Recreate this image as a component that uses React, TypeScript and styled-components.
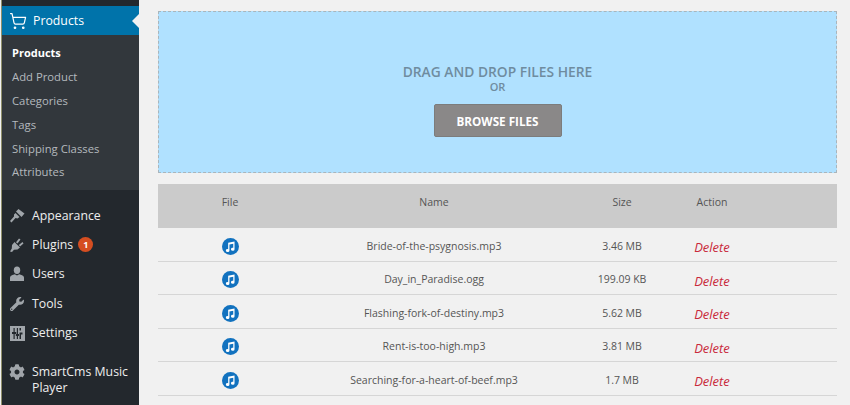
import React from 'react';
import styled, { createGlobalStyle } from 'styled-components';
import { FaWrench, FaCog } from 'react-icons/fa';
import { ShoppingCart } from 'lucide-react';

const GlobalStyle = createGlobalStyle`
  html, body {
    margin: 0;
    padding: 0;
    height: 405px;
    overflow: hidden;
    background: #f1f1f1;
    font-family: "Open Sans", "Noto Sans", sans-serif;
  }
`;

const Page = styled.div`
  display: flex;
  width: 850px;
  height: 405px;
  overflow: hidden;
`;

const Sidebar = styled.nav`
  width: 138px;
  margin-left: 1px;
  flex-shrink: 0;
  padding-top: 6px;
  background: #23282d;
  border-left: 1px solid #8f8f6a;
  box-sizing: border-box;
`;

const ActiveItem = styled.div`
  position: relative;
  display: flex;
  align-items: center;
  height: 29px;
  background: #0073aa;
  color: #fff;
  font-size: 12.3px;
  padding-left: 7px;
  gap: 6px;

  &::after {
    content: '';
    position: absolute;
    right: 0;
    top: 8px;
    border: 7px solid transparent;
    border-right-color: #f1f1f1;
    border-left-width: 0;
  }
`;

const SubMenu = styled.div`
  background: #32373c;
  padding: 6px 0 6px 10px;
  height: 155px;
  box-sizing: border-box;
`;

const SubItem = styled.div<{ $current?: boolean }>`
  height: 23.9px;
  line-height: 24px;
  font-size: ${(p) => (p.$current ? 11 : 11.3)}px;
  color: ${(p) => (p.$current ? '#fff' : '#b4b9be')};
  font-weight: ${(p) => (p.$current ? 700 : 400)};
`;

const MainMenu = styled.div`
  padding-top: 11px;
`;

const MenuItem = styled.div<{ $wrapped?: boolean }>`
  display: flex;
  align-items: ${(p) => (p.$wrapped ? 'flex-start' : 'center')};
  min-height: 29.4px;
  margin-top: ${(p) => (p.$wrapped ? 16 : 0)}px;
  padding-left: 7px;
  gap: 7px;
  color: #eee;
  font-size: 12.3px;
  line-height: 16px;
`;

const IconSlot = styled.span`
  display: flex;
  width: 16px;
  height: 16px;
  justify-content: center;
  align-items: center;
  color: #a0a5aa;
  flex-shrink: 0;
`;

const Badge = styled.span`
  display: inline-block;
  width: 15px;
  height: 15px;
  margin-left: 5px;
  border-radius: 50%;
  background: #d54e21;
  color: #fff;
  font-size: 9px;
  font-weight: 700;
  line-height: 15px;
  text-align: center;
  vertical-align: 1px;
`;

const Content = styled.main`
  flex: 1;
  padding: 11px 13px 0 19px;
  min-width: 0;
`;

const DropZone = styled.div`
  display: flex;
  flex-direction: column;
  align-items: center;
  height: 162px;
  padding-top: 52px;
  box-sizing: border-box;
  background: #b0e1ff;
  border: 1px dashed #a9b5bc;
`;

const DropTitle = styled.div`
  font-size: 13.8px;
  line-height: 16px;
  font-weight: 600;
  color: #6f8c9f;
`;

const DropOr = styled.div`
  font-size: 11px;
  line-height: 14px;
  font-weight: 600;
  color: #6f8c9f;
`;

const BrowseButton = styled.button`
  margin-top: 10px;
  width: 128px;
  height: 33px;
  padding: 0;
  border: 1px solid #7c7c7c;
  border-radius: 2px;
  background: #8a8888;
  color: #fff;
  font-family: inherit;
  font-size: 11.7px;
  font-weight: 700;
`;

const Table = styled.div`
  margin-top: 11px;
`;

const columns = '144px 264px 112px 68px 1fr';

const HeadRow = styled.div`
  display: grid;
  grid-template-columns: ${columns};
  height: 44px;
  background: #cbcbcb;
  padding-top: 10px;
  box-sizing: border-box;
  color: #555;
  font-size: 10.5px;
  line-height: 16px;
  text-align: center;
`;

const FileRow = styled.div`
  display: grid;
  grid-template-columns: ${columns};
  align-items: center;
  height: 33.5px;
  padding-top: 3px;
  box-sizing: border-box;
  border-bottom: 1px solid #d6d6d6;
  color: #555;
  font-size: 10.5px;
  text-align: center;
`;

const MusicBadge = styled.svg`
  display: block;
  width: 17px;
  height: 17px;
  margin: 1px auto 0;
`;

const DeleteLink = styled.a`
  color: #c9293a;
  font-size: 13px;
  font-style: italic;
  margin-top: 3px;
`;

const files = [
  { name: 'Bride-of-the-psygnosis.mp3', size: '3.46 MB' },
  { name: 'Day_in_Paradise.ogg', size: '199.09 KB' },
  { name: 'Flashing-fork-of-destiny.mp3', size: '5.62 MB' },
  { name: 'Rent-is-too-high.mp3', size: '3.81 MB' },
  { name: 'Searching-for-a-heart-of-beef.mp3', size: '1.7 MB' },
];

const BrushIcon = () => (
  <svg width="16" height="16" viewBox="0 0 16 16" fill="currentColor">
    <path d="M9.500 1 15.500 5.500 12.500 9 7 3.500z" />
    <path d="M6.500 5 10.500 9 8.500 10.500 6.500 10 2.500 14.500 1 13 5 8.500 5 6.500z" />
  </svg>
);

const PlugIcon = () => (
  <svg width="16" height="16" viewBox="0 0 16 16" fill="currentColor">
    <path d="M5.500 5 11 10.500 8.500 12.500 5 12.800 3 15 1 14.500 2.800 11.500 3 8z" />
    <path d="M7 5.200 10 1.500 11.500 2.500 8.500 6.500zM9.800 8 13.500 5 14.500 6.500 11 9.500z" />
  </svg>
);

const UserIcon = () => (
  <svg width="16" height="16" viewBox="0 0 16 16" fill="currentColor">
    <ellipse cx="8" cy="4.200" rx="3.200" ry="3.700" />
    <path d="M1 15v-3.500Q1 9.500 3.500 9L5.800 8.200 8 9.500 10.200 8.200 12.500 9Q15 9.500 15 11.500V15z" />
  </svg>
);

const SettingsIcon = () => (
  <svg width="15" height="15" viewBox="0 0 15 15">
    <path
      fill="currentColor"
      fillRule="evenodd"
      d="M0 0h15v15H0zM3.500 2v4h-1.500v2h1.500v5h1.200V8h1.500V6H4.700V2zM9.500 2v2.500h1.500V2zM9.500 6.500v6.500h1.500V8.500h1.500v-2zM6.800 2v6H5.800v2h1v3H8v-3h1V8H8V2z"
    />
  </svg>
);

const MusicIcon = () => (
  <MusicBadge viewBox="0 0 16 16">
    <circle cx="8" cy="8" r="8" fill="#1272bf" />
    <path
      fill="#fff"
      d="M5.800 4.500 11.800 3.200v7.300a1.700 1.400 0 1 1-1.200-1.300V5.300L7 6v5.800a1.700 1.400 0 1 1-1.200-1.300z"
    />
  </MusicBadge>
);

export default function App() {
  return (
    <Page>
      <GlobalStyle />
      <Sidebar>
        <ActiveItem>
          <ShoppingCart size={18} strokeWidth={1.6} />
          <span>Products</span>
        </ActiveItem>
        <SubMenu>
          <SubItem $current>Products</SubItem>
          <SubItem>Add Product</SubItem>
          <SubItem>Categories</SubItem>
          <SubItem>Tags</SubItem>
          <SubItem>Shipping Classes</SubItem>
          <SubItem>Attributes</SubItem>
        </SubMenu>
        <MainMenu>
          <MenuItem>
            <IconSlot><BrushIcon /></IconSlot>
            <span>Appearance</span>
          </MenuItem>
          <MenuItem>
            <IconSlot><PlugIcon /></IconSlot>
            <span>Plugins<Badge>1</Badge></span>
          </MenuItem>
          <MenuItem>
            <IconSlot><UserIcon /></IconSlot>
            <span>Users</span>
          </MenuItem>
          <MenuItem>
            <IconSlot><FaWrench size={14} /></IconSlot>
            <span>Tools</span>
          </MenuItem>
          <MenuItem>
            <IconSlot><SettingsIcon /></IconSlot>
            <span>Settings</span>
          </MenuItem>
          <MenuItem $wrapped>
            <IconSlot><FaCog size={16} /></IconSlot>
            <span>SmartCms Music Player</span>
          </MenuItem>
        </MainMenu>
      </Sidebar>
      <Content>
        <DropZone>
          <DropTitle>DRAG AND DROP FILES HERE</DropTitle>
          <DropOr>OR</DropOr>
          <BrowseButton>BROWSE FILES</BrowseButton>
        </DropZone>
        <Table>
          <HeadRow>
            <span>File</span>
            <span>Name</span>
            <span>Size</span>
            <span>Action</span>
          </HeadRow>
          {files.map((f) => (
            <FileRow key={f.name}>
              <MusicIcon />
              <span>{f.name}</span>
              <span>{f.size}</span>
              <DeleteLink>Delete</DeleteLink>
            </FileRow>
          ))}
        </Table>
      </Content>
    </Page>
  );
}
